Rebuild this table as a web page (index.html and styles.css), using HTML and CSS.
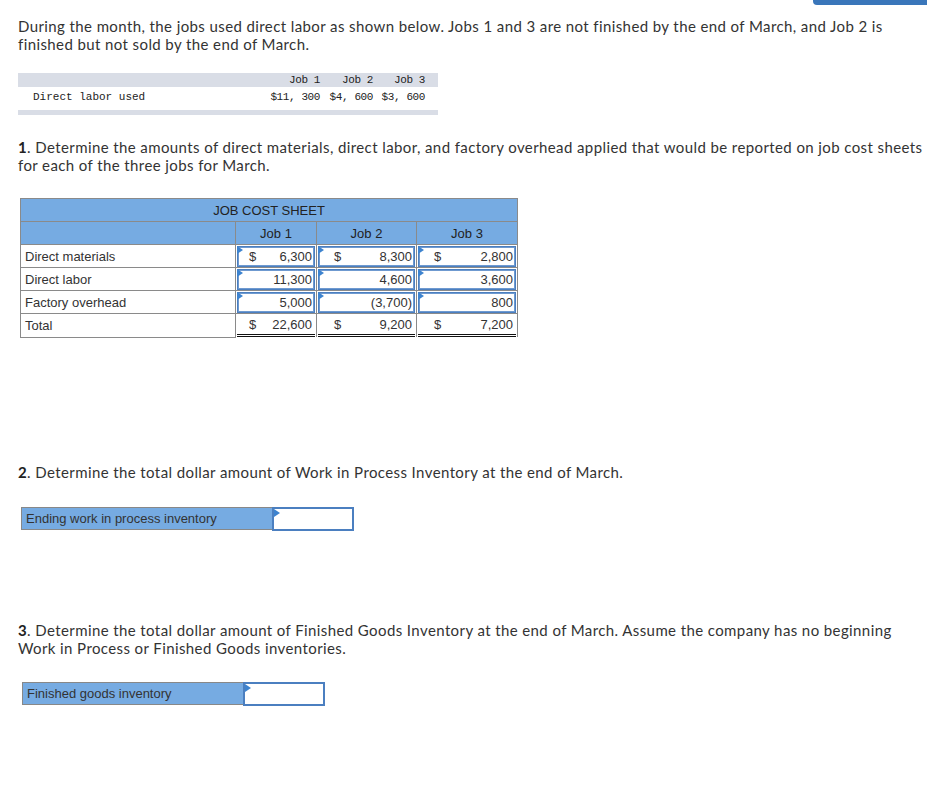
FILE: index.html
```html
<!DOCTYPE html>
<html>
<head>
<meta charset="utf-8">
<link rel="stylesheet" href="styles.css">
</head>
<body>
<div class="topbar"></div>
<div class="page">
  <p class="para p-intro">During the month, the jobs used direct labor as shown below. Jobs 1 and 3 are not finished by the end of March, and Job 2 is finished but not sold by the end of March.</p>

  <table class="given">
    <colgroup>
      <col class="gc-label">
      <col class="gc-v1">
      <col class="gc-v2">
      <col class="gc-v3">
    </colgroup>
    <tr class="band">
      <td class="g-label"></td>
      <td class="g-val">Job 1</td>
      <td class="g-val">Job 2</td>
      <td class="g-val g-last">Job 3</td>
    </tr>
    <tr class="g-row">
      <td class="g-label">Direct labor used</td>
      <td class="g-val">$11, 300</td>
      <td class="g-val">$4, 600</td>
      <td class="g-val g-last">$3, 600</td>
    </tr>
    <tr class="band-bottom"><td colspan="4"></td></tr>
  </table>

  <p class="para p-q1"><b>1</b>. Determine the amounts of direct materials, direct labor, and factory overhead applied that would be reported on job cost sheets for each of the three jobs for March.</p>

  <table class="jcs">
    <colgroup>
      <col class="jc-label">
      <col class="jc-1">
      <col class="jc-2">
      <col class="jc-3">
    </colgroup>
    <tr class="head">
      <td colspan="4" class="title">JOB COST SHEET</td>
    </tr>
    <tr class="head">
      <td></td>
      <td class="job">Job 1</td>
      <td class="job">Job 2</td>
      <td class="job">Job 3</td>
    </tr>
    <tr>
      <td class="lbl">Direct materials</td>
      <td class="in"><div class="box b1"><span class="tri"></span><span class="cur">$</span><span class="num">6,300</span></div></td>
      <td class="in"><div class="box"><span class="tri"></span><span class="cur">$</span><span class="num">8,300</span></div></td>
      <td class="in"><div class="box"><span class="tri"></span><span class="cur">$</span><span class="num">2,800</span></div></td>
    </tr>
    <tr>
      <td class="lbl">Direct labor</td>
      <td class="in"><div class="box b1"><span class="tri"></span><span class="cur"></span><span class="num">11,300</span></div></td>
      <td class="in"><div class="box"><span class="tri"></span><span class="cur"></span><span class="num">4,600</span></div></td>
      <td class="in"><div class="box"><span class="tri"></span><span class="cur"></span><span class="num">3,600</span></div></td>
    </tr>
    <tr>
      <td class="lbl">Factory overhead</td>
      <td class="in"><div class="box b1"><span class="tri"></span><span class="cur"></span><span class="num">5,000</span></div></td>
      <td class="in"><div class="box"><span class="tri"></span><span class="cur"></span><span class="num">(3,700)</span></div></td>
      <td class="in"><div class="box"><span class="tri"></span><span class="cur"></span><span class="num">800</span></div></td>
    </tr>
    <tr class="total">
      <td class="lbl">Total</td>
      <td class="tot"><div class="tbox b1"><span class="cur">$</span><span class="num">22,600</span></div></td>
      <td class="tot"><div class="tbox"><span class="cur">$</span><span class="num">9,200</span></div></td>
      <td class="tot"><div class="tbox"><span class="cur">$</span><span class="num">7,200</span></div></td>
    </tr>
  </table>

  <p class="para p-q2"><b>2</b>. Determine the total dollar amount of Work in Process Inventory at the end of March.</p>

  <table class="answer a-wip">
    <tr>
      <td class="a-lbl">Ending work in process inventory</td>
      <td class="a-in"><span class="tri"></span></td>
    </tr>
  </table>

  <p class="para p-q3"><b>3</b>. Determine the total dollar amount of Finished Goods Inventory at the end of March. Assume the company has no beginning Work in Process or Finished Goods inventories.</p>

  <table class="answer a-fg">
    <tr>
      <td class="a-lbl">Finished goods inventory</td>
      <td class="a-in"><span class="tri"></span></td>
    </tr>
  </table>
</div>
</body>
</html>
```

FILE: styles.css
```css
html, body {
  margin: 0;
  padding: 0;
  background: #fff;
}

.topbar {
  position: absolute;
  top: 0;
  right: 0;
  width: 114px;
  height: 5px;
  background: #3a76ba;
  border-bottom-left-radius: 4px;
}

.page {
  padding: 17px 0 0 18px;
  font-family: "Lato", "Liberation Sans", sans-serif;
  color: #333;
}

.para {
  margin: 0;
  font-size: 15px;
  line-height: 18px;
  letter-spacing: 0.4px;
  width: 909px;
}

.para b {
  font-weight: 700;
  color: #222;
  letter-spacing: 0.4px;
}

/* given data table */
.given {
  margin-top: 20px;
  border-collapse: collapse;
  table-layout: fixed;
  width: 420px;
  font-family: "Liberation Mono", "DejaVu Sans Mono", monospace;
  font-size: 11px;
  color: #222;
}

.gc-label { width: 246px; }
.gc-v1 { width: 56px; }
.gc-v2 { width: 53px; }
.gc-v3 { width: 65px; }

.given td {
  padding: 0;
  height: 14px;
  line-height: 14px;
  white-space: pre;
  overflow: visible;
}

.given .band td {
  background: #d9dde6;
}

.given .g-row td {
  height: 16px;
  padding-top: 2px;
}

.given .g-label {
  padding-left: 15px;
  text-align: left;
}

.given .g-val {
  text-align: right;
  padding-right: 0;
  letter-spacing: -0.4px;
}

.given .g-last {
  padding-right: 13px;
}

.given .band-bottom td {
  height: 5px;
  line-height: 5px;
  background: #d9dde6;
  border-top: 5px solid #fff;
}

.p-q1 {
  margin-top: 23px;
}

/* job cost sheet */
.jcs {
  margin-top: 24px;
  margin-left: 2px;
  border-collapse: collapse;
  font-family: "Liberation Sans", Arial, sans-serif;
  font-size: 13px;
  color: #333;
  table-layout: fixed;
  width: 497px;
}

.jc-label { width: 215px; }
.jc-1 { width: 81px; }
.jc-2 { width: 100px; }
.jc-3 { width: 101px; }

.jcs td {
  border: 1px solid #8a8a8a;
  height: 22px;
  padding: 0;
}

.jcs .head td {
  background: #76abe2;
  text-align: center;
  font-size: 13px;
  color: #222;
}

.jcs .lbl {
  padding-left: 4px;
  background: #fff;
}

.jcs .in {
  padding: 0 1px;
}

.box {
  position: relative;
  height: 19px;
  border: 1px solid #4b7fc0;
  box-shadow: inset 0 0 0 1px #6f9ad0;
  background: #fff;
  display: flex;
  justify-content: space-between;
  align-items: center;
  padding: 0 2px 0 15px;
}

.box.b1 {
  padding-left: 11px;
}

.tri {
  position: absolute;
  top: 0;
  left: 0;
  width: 0;
  height: 0;
  border-top: 4px solid transparent;
  border-bottom: 4px solid transparent;
  border-left: 6px solid #3d83cf;
}

.box .tri {
  top: -1px;
  left: -1px;
}

.tbox {
  display: flex;
  justify-content: space-between;
  align-items: center;
  height: 20px;
  padding: 0 3px 0 16px;
  border-bottom: 3px double #111;
}

.tbox.b1 {
  padding-left: 12px;
}

.jcs .tot {
  padding: 0 1px;
  border-bottom: none;
}

.p-q2 {
  margin-top: 125px;
}

/* answer tables */
.answer {
  border-collapse: collapse;
  font-family: "Liberation Sans", Arial, sans-serif;
  font-size: 13px;
  color: #333;
}

.answer td {
  height: 20px;
  padding: 0;
}

.a-lbl {
  background: #76abe2;
  border: 1px solid #888;
  padding-left: 4px !important;
}

.a-in {
  position: relative;
  background: #fff;
  border: 2px solid #4b7fc0;
  width: 78px;
}

.a-in .tri {
  top: 0;
  left: 0;
}

.a-wip {
  margin-top: 26px;
  margin-left: 3px;
}

.a-wip .a-lbl {
  width: 246px;
}

.p-q3 {
  margin-top: 90px;
}

.a-fg {
  margin-top: 25px;
  margin-left: 4px;
}

.a-fg .a-lbl {
  width: 216px;
}
```
